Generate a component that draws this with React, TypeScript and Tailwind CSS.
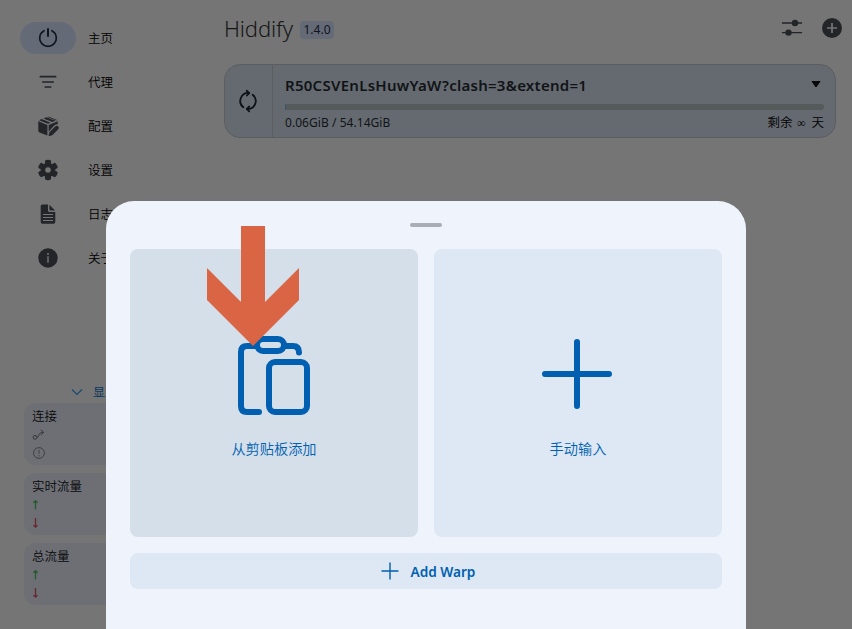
import React from "react";

const latin = "font-['Noto_Sans','Noto_Sans_CJK_SC',sans-serif]";
const cjk = "font-['Noto_Sans_CJK_SC',sans-serif]";

const PowerIcon = () => (
  <svg width="24" height="24" viewBox="0 0 24 24" fill="none" stroke="#11151e" strokeWidth="1.6" strokeLinecap="round">
    <path d="M8.1 4.7A8.3 8.3 0 1 0 15.9 4.7" />
    <path d="M12 3v7" strokeWidth="2" />
  </svg>
);
const FilterIcon = () => (
  <svg width="24" height="24" viewBox="0 0 24 24" stroke="#232529" strokeWidth="1.7" strokeLinecap="round">
    <path d="M4.4 6.7h15.2M6.8 12h10.4M9.3 17h5.4" />
  </svg>
);
const BoxIcon = () => (
  <svg width="24" height="24" viewBox="0 0 24 24" fill="#232529">
    <path d="M2.3 7.3 11.4 10.9v10.7L3.5 18.5Q2.3 18 2.3 16.8Z" />
    <path d="M3 6.2 5.6 5.1l9 3.6-2.6 1.1ZM7.4 4.4l3.1-1.2 9 3.6-3.1 1.2ZM12.3 2.7q.7 0 1.3.3L21 6.1l-.8.3-8.7-3.5Z" />
    <path d="M12.7 10.9 21.7 7.3v3q-2-.1-3.5 1.3l-4.6 4.8q-.6.7-.9 1.8Z" />
    <path d="M19.2 12.4q1.4-1.4 2.9-.1t.1 2.9l-5.1 5.3q-.6.7-1.6 1l-2 .5q-1.1.2-.8-.9l.5-2q.2-.9.9-1.6Z" />
  </svg>
);
const GearIcon = () => (
  <svg width="24" height="24" viewBox="0 0 24 24">
    <g fill="#232529">
      <circle cx="12" cy="12" r="6.8" />
      {[0, 60, 120, 180, 240, 300].map((a) => (
        <path key={a} transform={`rotate(${a} 12 12)`} d="M8 7.4Q8.9 6.3 9 4.6V3.2Q9.1 2.1 10.2 2q1.8-.3 3.6 0 1.1.1 1.2 1.2v1.4Q15.1 6.3 16 7.4Z" />
      ))}
    </g>
    <circle cx="12" cy="12" r="2.8" fill="#757575" />
  </svg>
);
const DocIcon = () => (
  <svg width="24" height="24" viewBox="0 0 24 24">
    <path fill="#232529" d="M6.4 2.4H12v6q0 1.6 1.6 1.6h5.7v10q0 1.7-1.7 1.7H6.4q-1.7 0-1.7-1.7V4.1q0-1.7 1.7-1.7ZM13.4 2.7 19 8.5h-4.3q-1.3 0-1.3-1.3Z" />
    <path stroke="#757575" d="M7 12.5h10M7 15.5h10M7 18.5h10" />
  </svg>
);
const InfoIcon = () => (
  <svg width="24" height="24" viewBox="0 0 24 24">
    <circle cx="12" cy="12" r="9.7" fill="#232529" />
    <path stroke="#757575" strokeWidth="1.4" strokeLinecap="round" d="M12 10.8v5.4" />
    <circle cx="12" cy="8" r="1" fill="#757575" />
  </svg>
);
const SyncIcon = () => (
  <svg className="-ml-0.5" width="24" height="24" viewBox="0 0 24 24" fill="none" stroke="#0e1115" strokeWidth="1.8" strokeLinecap="round" strokeLinejoin="round">
    <path d="M7.4 18.3A8 8 0 0 1 13 4M16.6 5.7A8 8 0 0 1 11 20" />
    <path d="M10.7 1.7 13.2 4.1 10.9 6.5M13.3 17.5 10.8 19.9 13.1 22.3" />
  </svg>
);
const ArrowIcon = ({ down = false }: { down?: boolean }) => (
  <svg width="10" height="12" viewBox="0 0 10 12" fill="none" stroke={down ? "#672630" : "#235b2c"} strokeWidth="1.3">
    {down ? <path d="M3.5 1v9M1.4 8.1l2.1 2.1 2.1-2.1" /> : <path d="M3.5 10.5v-9M1.4 3.8l2.1-2.1 2.1 2.1" />}
  </svg>
);
const LinkIcon = () => (
  <svg width="14" height="12" viewBox="0 0 14 12" fill="none" stroke="#34363a">
    <circle cx="3" cy="8.3" r="1.9" />
    <path d="M4.9 8.3C8 8.3 5 3.3 11.5 3.3M8.8.8l2.8 2.5-2.8 2.8" />
  </svg>
);
const NoticeIcon = () => (
  <svg width="14" height="14" viewBox="0 0 14 14" fill="none" stroke="#3e4044">
    <circle cx="7" cy="7" r="5.4" />
    <path d="M7 3.8v4M7 9.2v1.2" />
  </svg>
);
const ClipboardIcon = () => (
  <svg width="80" height="84" viewBox="0 0 80 84" fill="none" stroke="#005fb0" strokeWidth="6" strokeLinecap="round" strokeLinejoin="round">
    <path d="M25 79H13q-6 0-6-6V19q0-6 6-6h10M50 13h9q6 0 6 6.5" />
    <rect x="23" y="6" width="27" height="12" rx="6" />
    <rect x="35" y="29" width="38" height="50" rx="6" />
  </svg>
);

const nav = [
  { label: "主页", Icon: PowerIcon },
  { label: "代理", Icon: FilterIcon },
  { label: "配置", Icon: BoxIcon },
  { label: "设置", Icon: GearIcon },
  { label: "日志", Icon: DocIcon },
  { label: "关于", Icon: InfoIcon },
];

function StatCard({ title, children }: { title: string; children: React.ReactNode }) {
  return (
    <div className="h-[62px] rounded-xl bg-[#6d6f75] px-2 pt-[3px]">
      <div className="h-5 text-[12.5px] leading-5 font-[350] text-[#08090b]">{title}</div>
      {children}
    </div>
  );
}

function Sidebar() {
  return (
    <aside className={`flex w-52 shrink-0 flex-col pt-4 ${cjk}`}>
      <nav>
        {nav.map(({ label, Icon }, i) => (
          <div key={label} className="flex h-11 items-center gap-3 pl-5">
            <span className={`flex h-8 w-14 items-center justify-center rounded-full ${i === 0 ? "bg-[#656a77]" : ""}`}>
              <Icon />
            </span>
            <span className="text-[12.5px] leading-5 font-[350] text-black">{label}</span>
          </div>
        ))}
      </nav>
      <div className="mt-auto flex h-5 items-center gap-2.5 pl-[71px] text-[12px] text-[#073660]">
        <svg width="12" height="8" viewBox="0 0 12 8" fill="none" stroke="#174a73" strokeWidth="1.2"><path d="m1 1.5 5 5 5-5" /></svg>
        <span>显示更多</span>
      </div>
      <div className="mt-px mb-6 ml-6 flex w-40 flex-col gap-2">
        <StatCard title="连接">
          <div className="flex h-[18px] items-center"><LinkIcon /></div>
          <div className="flex h-[18px] items-center"><NoticeIcon /></div>
        </StatCard>
        <StatCard title="实时流量">
          <div className="flex h-[18px] items-center"><ArrowIcon /></div>
          <div className="flex h-[18px] items-center"><ArrowIcon down /></div>
        </StatCard>
        <StatCard title="总流量">
          <div className="flex h-[18px] items-center"><ArrowIcon /></div>
          <div className="flex h-[18px] items-center"><ArrowIcon down /></div>
        </StatCard>
      </div>
    </aside>
  );
}

function Main() {
  return (
    <main className="flex flex-1 flex-col pr-4 pl-4">
      <header className="flex h-14 items-center">
        <h1 className="w-[76px] text-[22px] leading-7 font-light tracking-[-0.1px] text-[#141517]">Hiddify</h1>
        <span className="mt-[3px] flex h-[18px] w-[34px] items-center justify-center rounded bg-[#656a77] text-[12px] text-[#10141c]">1.4.0</span>
        <div className="mr-[-7px] ml-auto flex items-center gap-[18px]">
          <svg width="22" height="20" viewBox="0 0 22 20" stroke="#232529" strokeWidth="1.4" fill="#232529">
            <path d="M1 5h20M1 14.6h20" /><circle cx="14" cy="5" r="2.5" /><circle cx="7.5" cy="14.6" r="2.5" />
          </svg>
          <svg width="22" height="22" viewBox="0 0 22 22"><circle cx="11" cy="11" r="10" fill="#232529" /><path d="M11 6v10M6 11h10" stroke="#757575" strokeWidth="1.7" /></svg>
        </div>
      </header>
      <section className="mt-2 flex h-[74px] rounded-2xl border border-[#5b5d61] bg-[#656a71]">
        <div className="flex w-12 items-center justify-center border-r border-[#5b5d61]"><SyncIcon /></div>
        <div className="flex flex-1 flex-col pr-[11px] pl-3">
          <div className="mt-[9px] flex h-[22px] items-center justify-between">
            <span className="text-[15px] font-semibold tracking-[0.27px] text-[#111416]">R50CSVEnLsHuwYaW?clash=3&amp;extend=1</span>
            <svg className="mr-[3px] mb-0.5" width="10" height="7" viewBox="0 0 10 7"><path d="M1 .5h8L5 6Z" fill="#080a0c" stroke="#080a0c" strokeLinejoin="round" /></svg>
          </div>
          <div className="mt-2 h-1.5 rounded-full bg-[#545b5a]"><div className="h-full w-px rounded-l-full bg-[#34546c]" /></div>
          <div className="mt-[3px] flex h-5 items-center justify-between text-[12px] leading-5 text-[#111416]">
            <span className="tracking-[0.05px]">0.06GiB / 54.14GiB</span>
            <span className="flex items-center gap-[4.5px] text-[12.5px] font-[350] text-black">
              <span>剩余</span>
              <span className="w-2.5 font-['DejaVu_Sans'] text-[12px]">∞</span>
              <span>天</span>
            </span>
          </div>
        </div>
      </section>
    </main>
  );
}

function AddProfileSheet() {
  return (
    <div className="absolute top-[201px] left-[106px] h-[428px] w-[640px] rounded-t-[28px] bg-[#eff3fb] px-6 pt-[22px] text-[#005fb0]">
      <div className="mx-auto h-1 w-8 rounded-full bg-[#a9adb6]" />
      <div className="mt-[22px] grid grid-cols-2 gap-4">
        <button className="flex h-72 flex-col items-center rounded-lg bg-[#d5dfea] pt-[84px]">
          <ClipboardIcon />
          <span className="mt-[21px] text-[14.2px] leading-[22px] font-[350]">从剪贴板添加</span>
        </button>
        <button className="flex h-72 flex-col items-center rounded-lg bg-[#dde8f4] pt-[84px]">
          <svg className="mr-0.5" width="80" height="84" viewBox="0 0 80 84" stroke="#005fb0" strokeWidth="6" strokeLinecap="round"><path d="M40 9v64M8 41h64" /></svg>
          <span className="mt-[21px] text-[14.2px] leading-[22px] font-[350]">手动输入</span>
        </button>
      </div>
      <button className="mt-4 flex h-9 w-full items-center justify-center gap-3 rounded-lg bg-[#dde8f4] pl-1 text-[13.7px] font-semibold">
        <svg width="18" height="18" viewBox="0 0 18 18" stroke="#005fb0" strokeWidth="1.4" strokeLinecap="round"><path d="M9 1v16M1 9h16" /></svg>
        <span className="pt-0.5 tracking-[-0.05px]">Add Warp</span>
      </button>
      <svg className="absolute top-[25px] left-[101px]" width="92" height="120" viewBox="0 0 92 120">
        <path fill="#d96545" d="M34 0h24v76l34-34v32l-46 46L0 74V42l34 34Z" />
      </svg>
    </div>
  );
}

export default function App() {
  return (
    <div className={`relative flex h-[629px] w-[852px] overflow-hidden bg-[#757575] ${latin}`}>
      <Sidebar />
      <Main />
      <AddProfileSheet />
    </div>
  );
}
